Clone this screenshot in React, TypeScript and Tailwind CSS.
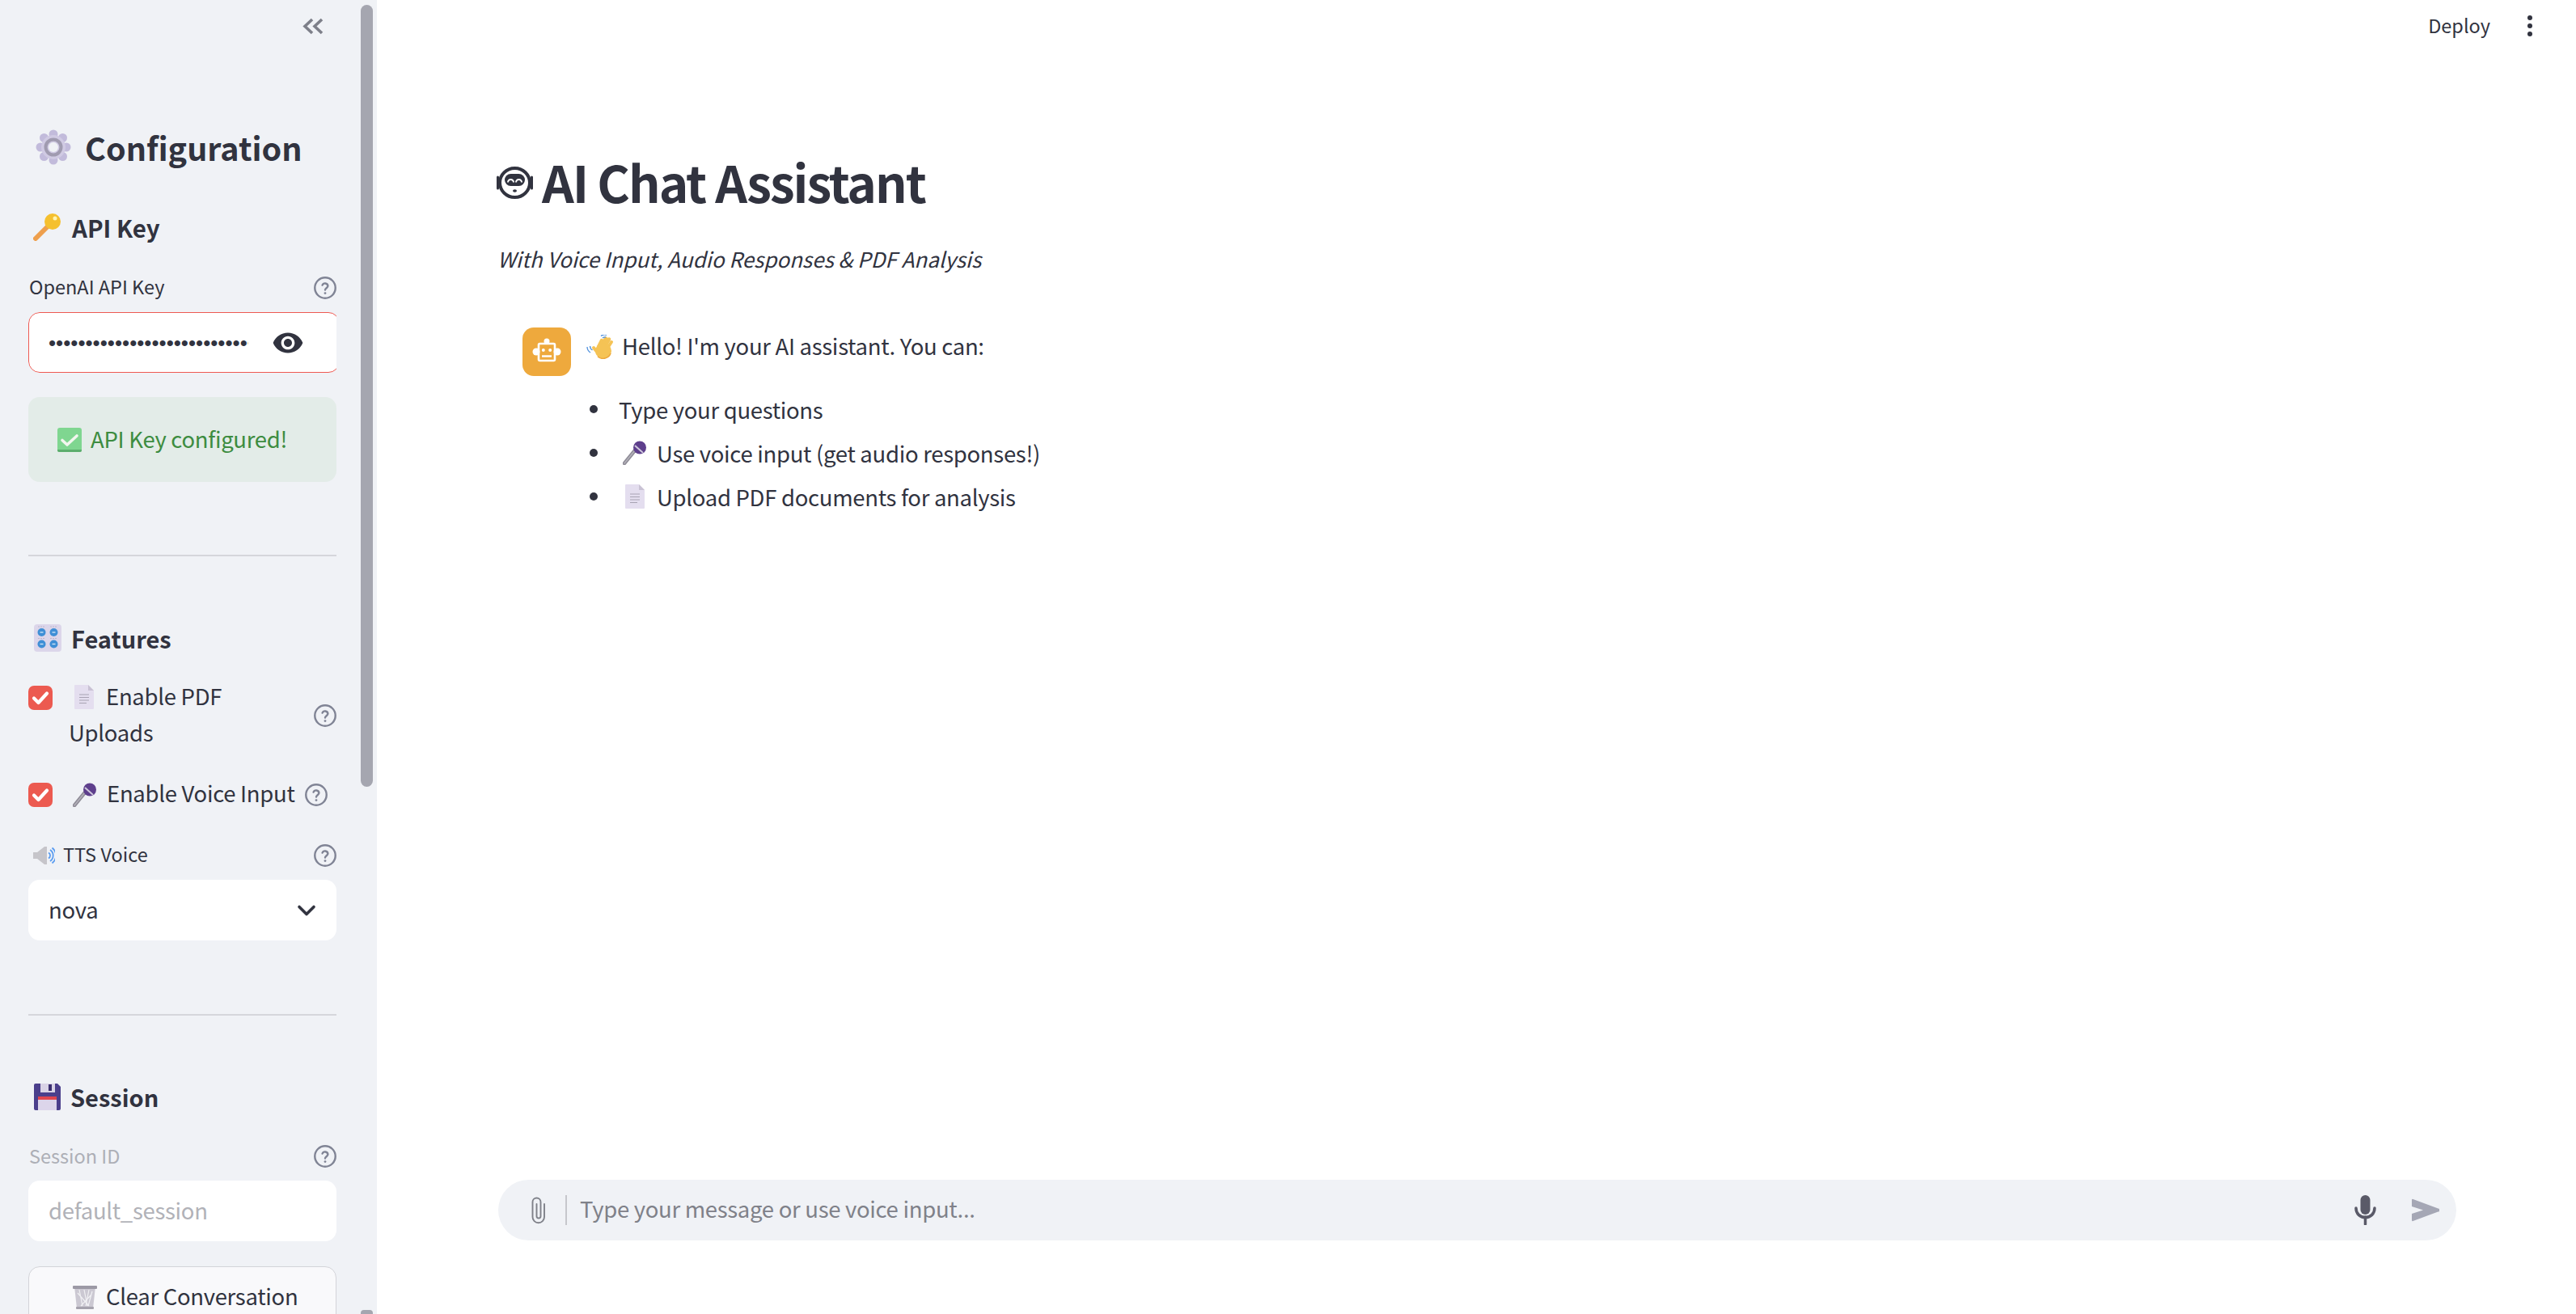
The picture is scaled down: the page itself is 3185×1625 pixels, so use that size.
const Help = () => (
  <svg viewBox="1 1 22 22" className="w-[28px] h-[28px] shrink-0" fill="none" stroke="#808495" strokeWidth="1.9">
    <circle cx="12" cy="12" r="10" />
    <path d="M9.3 9.4a2.8 2.8 0 0 1 5.4.7c0 1.8-2.7 2.3-2.7 3.9" strokeLinecap="round" />
    <circle cx="12" cy="17.2" r="1.1" fill="#808495" stroke="none" />
  </svg>
);

const GearEmoji = () => (
  <svg viewBox="0 0 44 44" className="w-[44px] h-[44px] shrink-0">
    <g fill="#c2bbdb">
      <circle cx="22" cy="6" r="5.5" />
      <circle cx="22" cy="38" r="5.5" />
      <circle cx="6" cy="22" r="5.5" />
      <circle cx="38" cy="22" r="5.5" />
      <circle cx="10.5" cy="10.5" r="5.5" />
      <circle cx="33.5" cy="10.5" r="5.5" />
      <circle cx="10.5" cy="33.5" r="5.5" />
      <circle cx="33.5" cy="33.5" r="5.5" />
    </g>
    <circle cx="22" cy="22" r="15" fill="#d0cae3" />
    <circle cx="22" cy="22" r="9.5" fill="none" stroke="#a09bb0" strokeWidth="4" />
    <circle cx="22" cy="22" r="6" fill="#f0f2f6" />
  </svg>
);

const KeyEmoji = () => (
  <svg viewBox="0 0 36 34" className="w-[36px] h-[34px] shrink-0">
    <path d="M3 31 19 15" stroke="#ee9f4d" strokeWidth="6" strokeLinecap="round" />
    <circle cx="24" cy="10" r="10" fill="#f5c02e" />
    <circle cx="27" cy="6" r="2.5" fill="#fff3b0" />
  </svg>
);

const CheckEmoji = () => (
  <svg viewBox="0 0 30 30" className="w-[30px] h-[30px] shrink-0">
    <rect width="30" height="30" rx="3" fill="#7fd690" />
    <path d="M0 27h30v1a2 2 0 0 1-2 2H2a2 2 0 0 1-2-2z" fill="#5cae6d" />
    <path d="M6 15.5 12 21 24 10" fill="none" stroke="#f2f6ee" strokeWidth="3.6" strokeLinecap="round" strokeLinejoin="round" />
  </svg>
);

const KnobsEmoji = () => (
  <svg viewBox="0 0 34 34" className="w-[34px] h-[34px] shrink-0">
    <rect width="34" height="34" rx="4" fill="#dcd6ea" />
    {[9.5, 24.5].map((x) =>
      [10, 24.5].map((y) => (
        <g key={`${x}-${y}`}>
          <circle cx={x} cy={y} r="5" fill="#3f8fd6" />
          <path d={`M${x - 2} ${y}h4`} stroke="#d6e8f7" strokeWidth="1.3" />
          <path d={`M${x - 4} ${y - 7}h8`} stroke="#9e97ae" strokeWidth="1" strokeDasharray="1 2" />
        </g>
      ))
    )}
  </svg>
);

const DocEmoji = () => (
  <svg viewBox="0 0 24 30" className="w-[24px] h-[30px] shrink-0">
    <path d="M0 1a1 1 0 0 1 1-1h16l7 7v22a1 1 0 0 1-1 1H1a1 1 0 0 1-1-1z" fill="#e4deef" />
    <path d="M17 0l7 7h-7z" fill="#c9c2d4" />
    <path d="M6 12h12M6 15.5h12M6 19h12M6 22.500h9" stroke="#a8a3b3" strokeWidth="1.1" />
  </svg>
);

const MicEmoji = () => (
  <svg viewBox="0 0 30 30" className="w-[30px] h-[30px] shrink-0">
    <path d="M2 28 15 12" stroke="#8e8b96" strokeWidth="4.500" strokeLinecap="round" />
    <path d="M2 28 15 12" stroke="#b3b1ba" strokeWidth="1.500" strokeLinecap="round" />
    <circle cx="21" cy="8.500" r="8" fill="#5e3f8c" />
    <path d="M15 6l10 9" stroke="#cfc8dc" strokeWidth="2" />
  </svg>
);

const SpeakerEmoji = () => (
  <svg viewBox="0 0 27 22" className="w-[27px] h-[22px] shrink-0">
    <path d="M0 7h5l9-7h3v22h-3l-9-7H0z" fill="#c6c5ca" />
    <path d="M19 7.500a4 4 0 0 1 0 7M21 4a8.500 8.500 0 0 1 0 14M23.500 1.500a12 12 0 0 1 0 19" fill="none" stroke="#5a9cf0" strokeWidth="1.800" />
  </svg>
);

const SaveEmoji = () => (
  <svg viewBox="0 0 33 33" className="w-[33px] h-[33px] shrink-0">
    <path d="M2 0h27l4 4v27a2 2 0 0 1-2 2H2a2 2 0 0 1-2-2V2a2 2 0 0 1 2-2z" fill="#4b3f8c" />
    <rect x="8" y="0" width="18" height="11" fill="#d9d3e6" />
    <rect x="18" y="1" width="4" height="8" fill="#3b2f70" />
    <rect x="5" y="16" width="23" height="17" fill="#dcd5ea" />
    <rect x="5" y="16" width="23" height="4" fill="#e0464f" />
  </svg>
);

const TrashEmoji = () => (
  <svg viewBox="0 0 30 30" className="w-[30px] h-[30px] shrink-0">
    <path d="M2 2h26l-3 27H5z" fill="#cbc8d2" />
    <path d="M8 6l4 20M14 6l4 20M20 6l-4 20M24 8l-5 18M6 10l14 16M23 12l-13 14" stroke="#f0f0f3" strokeWidth="1.200" />
    <rect x="0" y="1" width="30" height="4" rx="1" fill="#9c99a5" />
    <rect x="4" y="27" width="22" height="3" rx="1" fill="#a5a2ad" />
  </svg>
);

const WaveEmoji = () => (
  <svg viewBox="0 0 34 30" className="w-[34px] h-[30px] shrink-0">
    <g stroke="#f5c355" strokeLinecap="round" fill="none">
      <path d="M15 15 19 7" strokeWidth="4.500" />
      <path d="M19 14 24 4.500" strokeWidth="4.500" />
      <path d="M23 14 28 5.500" strokeWidth="4.500" />
      <path d="M27 15 31 9" strokeWidth="4" />
      <path d="M13 21 9 16" strokeWidth="4" />
    </g>
    <ellipse cx="21" cy="20" rx="10" ry="9.500" fill="#f5c355" />
    <path d="M14 27a10 9.500 0 0 0 16-4" fill="none" stroke="#eda83c" strokeWidth="1.500" />
    <path d="M1 15a8 8 0 0 0 4 7M4.500 14a6 6 0 0 0 3 5M18 1.500a7 7 0 0 1 7-1.200M20 4a5 5 0 0 1 4-1" fill="none" stroke="#4d8fdc" strokeWidth="1.300" />
  </svg>
);

const BotGlyph = () => (
  <svg viewBox="0 0 47 40" className="w-[47px] h-[40px] shrink-0" fill="none" stroke="#31333f">
    <ellipse cx="23.500" cy="20" rx="18.500" ry="18" strokeWidth="4" />
    <path d="M2.500 13v14M44.500 13v14" strokeWidth="3" strokeLinecap="round" />
    <rect x="11" y="9" width="25" height="15" rx="7.500" fill="#31333f" stroke="none" />
    <path d="M15 19.500a3.500 3.500 0 0 1 7 0M25 19.500a3.500 3.500 0 0 1 7 0" stroke="#fff" strokeWidth="2" />
    <ellipse cx="23.500" cy="30" rx="2.500" ry="1.800" fill="#31333f" stroke="none" />
  </svg>
);

const BotAvatar = () => (
  <svg viewBox="0 0 36 36" className="w-[36px] h-[36px]" fill="none" stroke="#fff">
    <rect x="8" y="8" width="20" height="21" rx="1.500" strokeWidth="2.600" />
    <circle cx="18" cy="5" r="3.500" fill="#fff" stroke="none" />
    <circle cx="5" cy="18" r="4.500" fill="#fff" stroke="none" />
    <circle cx="31" cy="18" r="4.500" fill="#fff" stroke="none" />
    <circle cx="13.800" cy="16" r="2" fill="#fff" stroke="none" />
    <circle cx="22.200" cy="16" r="2" fill="#fff" stroke="none" />
    <path d="M12 23.500h12" strokeWidth="2.400" />
  </svg>
);

const Checkbox = () => (
  <span className="w-[30px] h-[30px] rounded-[7px] bg-[#ec5a50] flex items-center justify-center shrink-0">
    <svg viewBox="0 0 30 30" className="w-[30px] h-[30px]" fill="none" stroke="#fff" strokeWidth="4.200" strokeLinecap="round" strokeLinejoin="round">
      <path d="M7 15.500 12.500 21 23 9.500" />
    </svg>
  </span>
);

const Sidebar = () => (
  <aside className="relative w-[466px] h-screen shrink-0 overflow-hidden bg-[#f0f2f6] pl-[35px] pr-[50px]">
    <svg viewBox="0 0 26 21" className="absolute left-[374px] top-[22px] w-[26px] h-[21px]" fill="none" stroke="#7d7f89" strokeWidth="3.600">
      <path d="M12 2 3 10.500l9 8.500M24 2l-9 8.500 9 8.500" />
    </svg>

    <div className="absolute left-[446px] top-[6px] w-[15px] h-[967px] rounded-full bg-[#a5a6b0]" />
    <div className="absolute left-[446px] top-[1620px] w-[15px] h-[5px] rounded-t-sm bg-[#a5a6b0]" />

    <div className="flex items-center gap-[17px] pl-[9px] pt-[158px]">
      <GearEmoji />
      <h2 className="text-[39.500px] leading-[48px] font-semibold">Configuration</h2>
    </div>

    <div className="flex items-center gap-[12px] pl-[6px] mt-[57px] h-[36px]">
      <KeyEmoji />
      <h3 className="text-[29.500px] leading-[36px] font-semibold">API Key</h3>
    </div>

    <div className="flex items-center justify-between mt-[42px] h-[29px]">
      <label className="text-[23.500px] leading-[29px] pl-[1px] pb-[2px]">OpenAI API Key</label>
      <Help />
    </div>
    <div className="overflow-hidden mt-[16px] rounded-l-[14px]">
      <div className="flex items-center h-[75px] w-[385px] pl-[24px] bg-white border border-[#ee5a52] rounded-[14px]">
        <input
          type="password"
          readOnly
          defaultValue="sk-proj-abcdefghijklmnopqrstuvwxyz0123456789"
          className="w-[247px] font-['Liberation_Sans',sans-serif] text-[26px] leading-[30px] outline-none bg-transparent"
        />
        <svg viewBox="0 0 24 24" className="w-[40px] h-[40px] ml-[29px]" fill="#31333f">
          <path d="M12 4.500C7 4.500 2.730 7.610 1 12c1.730 4.390 6 7.500 11 7.500s9.270-3.110 11-7.500c-1.730-4.390-6-7.500-11-7.500zM12 17c-2.760 0-5-2.240-5-5s2.240-5 5-5 5 2.240 5 5-2.240 5-5 5zm0-8c-1.660 0-3 1.340-3 3s1.340 3 3 3 3-1.340 3-3-1.340-3-3-3z" />
        </svg>
      </div>
    </div>

    <div className="flex items-center gap-[11px] h-[105px] mt-[30px] pl-[36px] rounded-[14px] bg-[#e3ece8] text-[#3d8c40]">
      <CheckEmoji />
      <span className="text-[27.500px] tracking-[-0.3px] leading-[36px] pb-[3px]">API Key configured!</span>
    </div>

    <hr className="mt-[90px] border-0 h-[2px] bg-[#d5d6db]" />

    <div className="flex items-center gap-[12px] pl-[7px] mt-[84px] h-[34px]">
      <KnobsEmoji />
      <h3 className="text-[29px] leading-[36px] font-semibold">Features</h3>
    </div>

    <div className="flex items-center justify-between mt-[34px]">
      <div className="flex items-start gap-[20px]">
        <span className="mt-[8px]">
          <Checkbox />
        </span>
        <p className="text-[27.500px] tracking-[-0.3px] leading-[45px] w-[260px] -mt-[2px] mb-[2px]">
          <span className="inline-flex align-[-5px] ml-[7px] mr-[15px]">
            <DocEmoji />
          </span>
          Enable PDF Uploads
        </p>
      </div>
      <Help />
    </div>

    <div className="flex items-center mt-[30px] h-[45px]">
      <Checkbox />
      <span className="ml-[25px] mr-[12px]">
        <MicEmoji />
      </span>
      <span className="text-[27.500px] tracking-[-0.3px] leading-[45px] whitespace-nowrap pb-[4px]">Enable Voice Input</span>
      <span className="ml-[12px]">
        <Help />
      </span>
    </div>

    <div className="flex items-center justify-between mt-[38px] h-[29px]">
      <div className="flex items-center gap-[10px] pl-[6px]">
        <SpeakerEmoji />
        <label className="text-[23.500px] leading-[29px] pb-[3px]">TTS Voice</label>
      </div>
      <Help />
    </div>
    <div className="flex items-center justify-between h-[75px] mt-[16px] pl-[25px] pr-[19px] rounded-[14px] bg-white">
      <span className="text-[27.500px] tracking-[-0.3px] leading-[36px] pb-[3px]">nova</span>
      <svg viewBox="0 0 24 24" className="w-[36px] h-[36px]" fill="none" stroke="#31333f" strokeWidth="2.400" strokeLinecap="round" strokeLinejoin="round">
        <path d="m6 9 6 6 6-6" />
      </svg>
    </div>

    <hr className="mt-[91px] border-0 h-[2px] bg-[#d5d6db]" />

    <div className="flex items-center gap-[12px] pl-[7px] mt-[83px] h-[34px]">
      <SaveEmoji />
      <h3 className="text-[29px] leading-[36px] font-semibold">Session</h3>
    </div>

    <div className="flex items-center justify-between mt-[42px] h-[29px]">
      <label className="text-[23.500px] leading-[29px] pl-[1px] text-[#adafb6]">Session ID</label>
      <Help />
    </div>
    <div className="flex items-center h-[75px] mt-[16px] pl-[25px] rounded-[14px] bg-white">
      <span className="text-[27.500px] tracking-[-0.3px] leading-[36px] pb-[3px] text-[#b1b2b8]">default_session</span>
    </div>

    <button className="flex items-center justify-start gap-[11px] w-full h-[75px] mt-[31px] pl-[54px] rounded-[14px] border border-[#d3d4d9] bg-[#f9f9fb]">
      <TrashEmoji />
      <span className="text-[27.500px] tracking-[-0.3px] leading-[36px] pb-[3px]">Clear Conversation</span>
    </button>
  </aside>
);

const Main = () => (
  <main className="flex-1 h-screen flex flex-col bg-white">
    <header className="flex items-center justify-end h-[63px] shrink-0 pr-[54px]">
      <span className="text-[23.500px] leading-[30px] pb-[1px]">Deploy</span>
      <span className="flex flex-col gap-[4px] ml-[46px]">
        <i className="w-[6px] h-[6px] rounded-full bg-[#31333f]" />
        <i className="w-[6px] h-[6px] rounded-full bg-[#31333f]" />
        <i className="w-[6px] h-[6px] rounded-full bg-[#31333f]" />
      </span>
    </header>

    <div className="flex-1 pl-[147px]">
      <div className="flex items-center gap-[10px] mt-[123px] h-[80px]">
        <BotGlyph />
        <h1 className="text-[62px] leading-[80px] font-semibold tracking-[-2px] pb-[5px]">AI Chat Assistant</h1>
      </div>
      <p className="italic text-[26px] leading-[36px] mt-[36px] ml-[2px]">
        With Voice Input, Audio Responses &amp; PDF Analysis
      </p>

      <div className="flex gap-[19px] ml-[33px] mt-[67px]">
        <div className="w-[60px] h-[60px] rounded-[14px] bg-[#eea93d] flex items-center justify-center shrink-0">
          <BotAvatar />
        </div>
        <div>
          <div className="flex items-center gap-[10px] h-[48px]">
            <WaveEmoji />
            <span className="text-[27.500px] tracking-[-0.3px] leading-[36px] pb-[4px]">Hello! I&apos;m your AI assistant. You can:</span>
          </div>
          <ul className="mt-[30px] flex flex-col gap-[6px]">
            <li className="flex items-center h-[48px] pb-[3px] text-[27.500px] tracking-[-0.3px] leading-[36px]">
              <i className="w-[10px] h-[10px] rounded-full bg-[#31333f] ml-[4px] mr-[26px]" />
              Type your questions
            </li>
            <li className="flex items-center h-[48px] pb-[3px] text-[27.500px] tracking-[-0.3px] leading-[36px]">
              <i className="w-[10px] h-[10px] rounded-full bg-[#31333f] ml-[4px] mr-[31px]" />
              <MicEmoji />
              <span className="ml-[12px]">Use voice input (get audio responses!)</span>
            </li>
            <li className="flex items-center h-[48px] pb-[3px] text-[27.500px] tracking-[-0.3px] leading-[36px]">
              <i className="w-[10px] h-[10px] rounded-full bg-[#31333f] ml-[4px] mr-[34px]" />
              <DocEmoji />
              <span className="ml-[15px]">Upload PDF documents for analysis</span>
            </li>
          </ul>
        </div>
      </div>
    </div>

    <div className="flex items-center h-[75px] shrink-0 ml-[150px] mr-[148px] mb-[91px] rounded-full bg-[#f0f2f6] pl-[41px] pr-[21px]">
      <svg viewBox="0 0 18 34" className="w-[18px] h-[34px]" fill="none" stroke="#7f8189" strokeWidth="1.900" strokeLinecap="round">
        <path d="M16 9v16a7.250 7.250 0 0 1-14.500 0V6.500a5 5 0 0 1 10 0V24a2.500 2.500 0 0 1-5 0V9" />
      </svg>
      <span className="w-[2px] h-[37px] bg-[#c6c7cc] ml-[24px]" />
      <span className="flex-1 ml-[16px] text-[27.500px] tracking-[-0.3px] leading-[36px] -mt-[6px] text-[#7f8189]">
        Type your message or use voice input...
      </span>
      <svg viewBox="0 0 27 37" className="w-[27px] h-[37px] mr-[44px]" fill="none">
        <rect x="7.500" y="0" width="12" height="24" rx="6" fill="#5a5a68" />
        <path d="M2 16c0 7 5 11.500 11.500 11.500S25 23 25 16" stroke="#5a5a68" strokeWidth="3.500" strokeLinecap="round" />
        <path d="M13.500 27v9" stroke="#5a5a68" strokeWidth="3.500" strokeLinecap="round" />
      </svg>
      <svg viewBox="0 0 34 29" className="w-[34px] h-[29px]">
        <path d="M1.500 1 32.500 12.500a2 2 0 0 1 0 4L1.500 28a1 1 0 0 1-1.500-1v-8l14-4.500L0 10V2a1 1 0 0 1 1.500-1z" fill="#a5a7b5" />
      </svg>
    </div>
  </main>
);

export default function App() {
  return (
    <div className="flex h-screen overflow-hidden text-[#31333f] font-['Noto_Sans_CJK_SC','Source_Sans_Pro',sans-serif]">
      <Sidebar />
      <Main />
    </div>
  );
}
